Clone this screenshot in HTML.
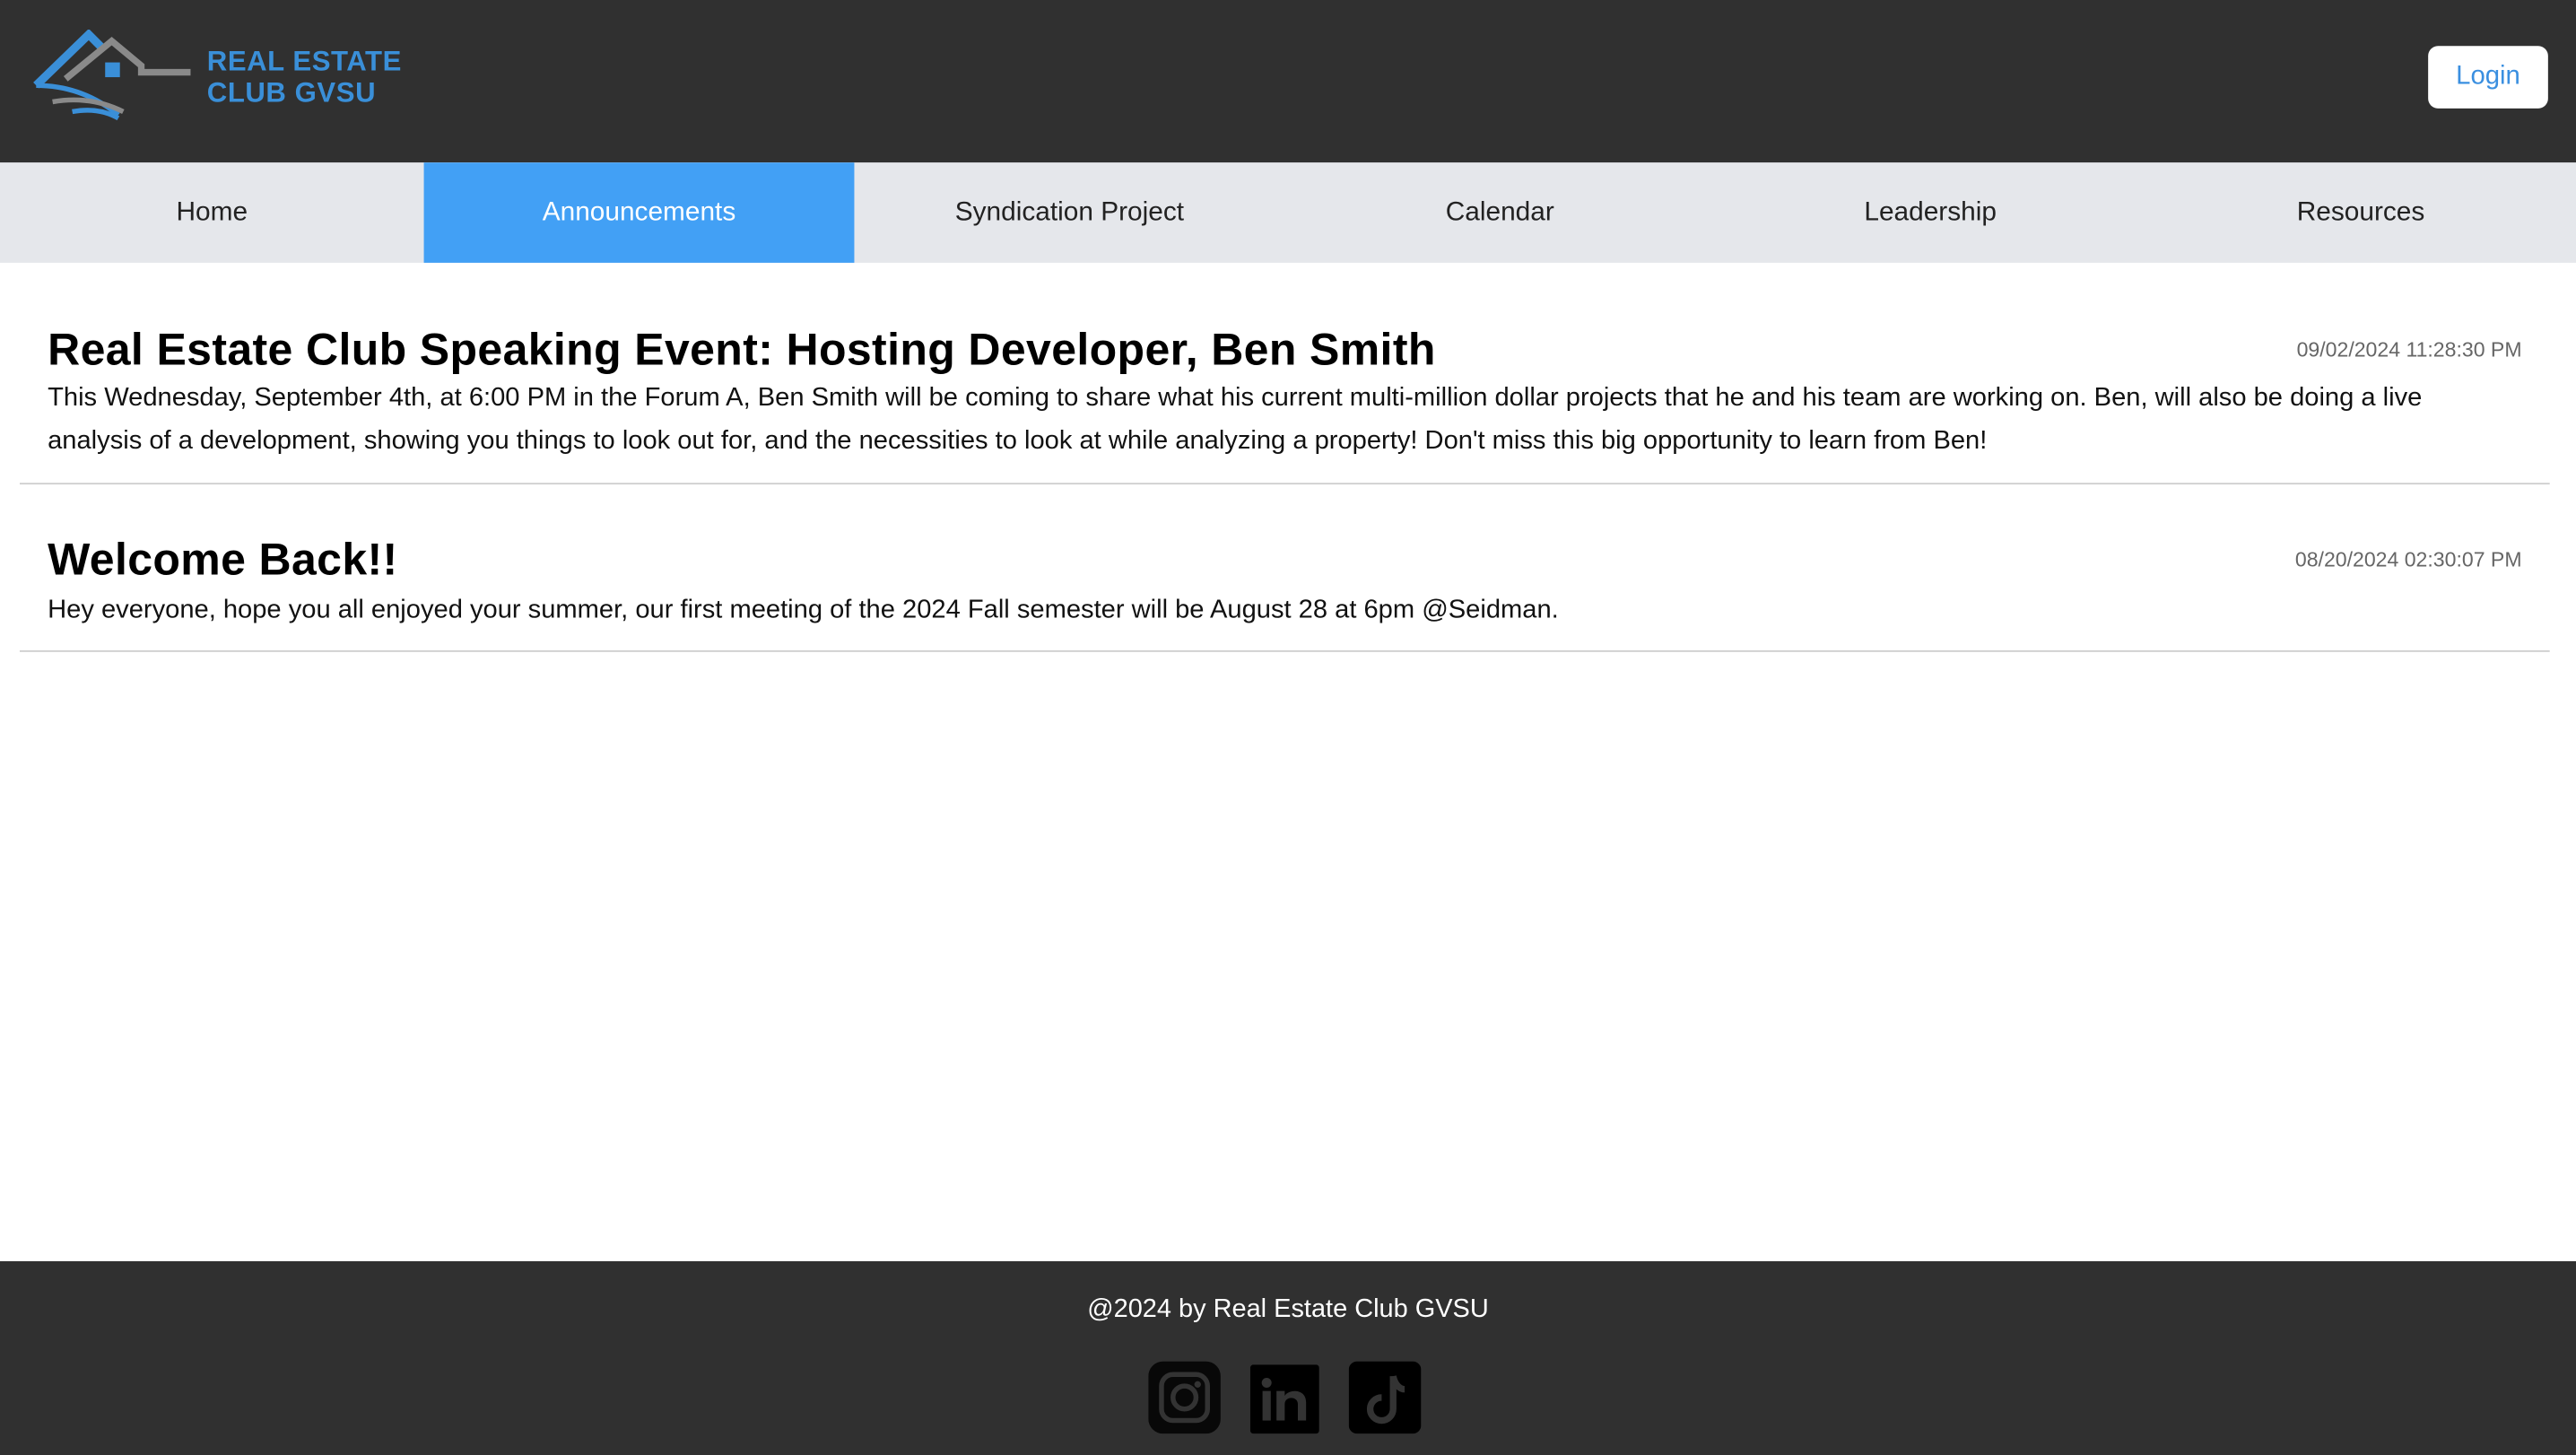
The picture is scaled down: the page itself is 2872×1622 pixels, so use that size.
<!DOCTYPE html>
<html><head><meta charset="utf-8"><style>
*{margin:0;padding:0;box-sizing:border-box}
html,body{width:2872px;height:1622px;overflow:hidden;background:#fff}
#w{width:1568px;height:886px;transform:scale(1.83163,1.83070);transform-origin:0 0;position:relative;font-family:"Liberation Sans",sans-serif}
.hd{position:absolute;left:0;top:0;width:1568px;height:99px;background:#303030}
.login{position:absolute;left:1478px;top:28px;width:73px;height:38px;background:#fff;border-radius:6px;color:#3a8fe0;font-size:16px;line-height:38px;text-align:center}
.nav{position:absolute;top:99px;left:0;width:1568px;height:61px;background:#e5e7eb;display:flex}
.nav div{width:262px;text-align:center;line-height:61px;font-size:16.3px;color:#222}
.nav div:first-child{width:258px}
.nav .a{background:#42a0f5;color:#fff}
.post{position:absolute;left:12px;width:1540px;border-bottom:1px solid #cfcfcf}
.t{position:absolute;left:17px;font-weight:bold;font-size:27.3px;color:#000;letter-spacing:0.2px}
.d{position:absolute;right:17px;font-size:12.6px;color:#666}
.b{position:absolute;left:17px;font-size:15.9px;line-height:26px;color:#111;width:1480px}
.ft{position:absolute;left:0;top:768px;width:1568px;height:118px;background:#303030}
.ft p{position:absolute;top:21px;width:100%;text-align:center;color:#fff;font-size:15.8px}
</style></head><body><div id="w">
<div class="hd">
<svg style="position:absolute;left:20px;top:18px" width="100" height="56" viewBox="0 0 100 56">
<path d="M2 34 L34 3 L42 11" stroke="#3a8fd8" stroke-width="5" fill="none"/>
<path d="M2 34 Q30 34 52 52" stroke="#3a8fd8" stroke-width="3" fill="none"/>
<path d="M20 30 L48 7 L66 22 L66 26 L96 26" stroke="#8a8a8a" stroke-width="4" fill="none"/>
<path d="M12 44 Q35 40 55 50" stroke="#8a8a8a" stroke-width="3" fill="none"/>
<path d="M24 50 Q40 47 52 54" stroke="#3a8fd8" stroke-width="3" fill="none"/>
<rect x="44" y="20" width="9" height="9" fill="#3a8fd8"/>
</svg>
<div style="position:absolute;left:126px;top:28px;color:#3a8fd8;font-weight:bold;font-size:17px;line-height:19px;letter-spacing:0.3px">REAL ESTATE<br>CLUB GVSU</div>
<div class="login">Login</div>
</div>
<div class="nav"><div>Home</div><div class="a">Announcements</div><div>Syndication Project</div><div>Calendar</div><div>Leadership</div><div>Resources</div></div>
<div class="post" style="top:160px;height:135px">
<div class="t" style="top:37px">Real Estate Club Speaking Event: Hosting Developer, Ben Smith</div>
<div class="d" style="top:46px">09/02/2024 11:28:30 PM</div>
<div class="b" style="top:70px">This Wednesday, September 4th, at 6:00 PM in the Forum A, Ben Smith will be coming to share what his current multi-million dollar projects that he and his team are working on. Ben, will also be doing a live analysis of a development, showing you things to look out for, and the necessities to look at while analyzing a property! Don't miss this big opportunity to learn from Ben!</div>
</div>
<div class="post" style="top:295px;height:102px">
<div class="t" style="top:30px">Welcome Back!!</div>
<div class="d" style="top:39px">08/20/2024 02:30:07 PM</div>
<div class="b" style="top:64px">Hey everyone, hope you all enjoyed your summer, our first meeting of the 2024 Fall semester will be August 28 at 6pm @Seidman.</div>
</div>
<div class="ft"><p>@2024 by Real Estate Club GVSU</p>
<svg style="position:absolute;left:699px;top:61px" width="44" height="44" viewBox="0 0 44 44"><rect width="44" height="44" rx="9" fill="#080808"/><rect x="8" y="8" width="28" height="28" rx="7" stroke="#333" stroke-width="3" fill="none"/><circle cx="22" cy="22" r="7" stroke="#333" stroke-width="3" fill="none"/><circle cx="30" cy="14" r="2" fill="#333"/></svg>
<svg style="position:absolute;left:761px;top:63px" width="42" height="42" viewBox="0 0 42 42"><rect width="42" height="42" rx="2" fill="#000"/><circle cx="10" cy="11" r="3" fill="#333"/><rect x="7.5" y="16" width="5" height="18" fill="#333"/><path d="M16 16h5v3c2-4 13-5 13 4v11h-5v-10c0-5-8-5-8 0v10h-5z" fill="#333"/></svg>
<svg style="position:absolute;left:821px;top:61px" width="44" height="44" viewBox="0 0 44 44"><rect width="44" height="44" rx="5" fill="#000"/><path d="M27 9v20a7 7 0 1 1-7-7" stroke="#333" stroke-width="4" fill="none"/><path d="M27 9c1 5 4 8 7 8" stroke="#333" stroke-width="4" fill="none"/></svg>
</div>
</div></body></html>
